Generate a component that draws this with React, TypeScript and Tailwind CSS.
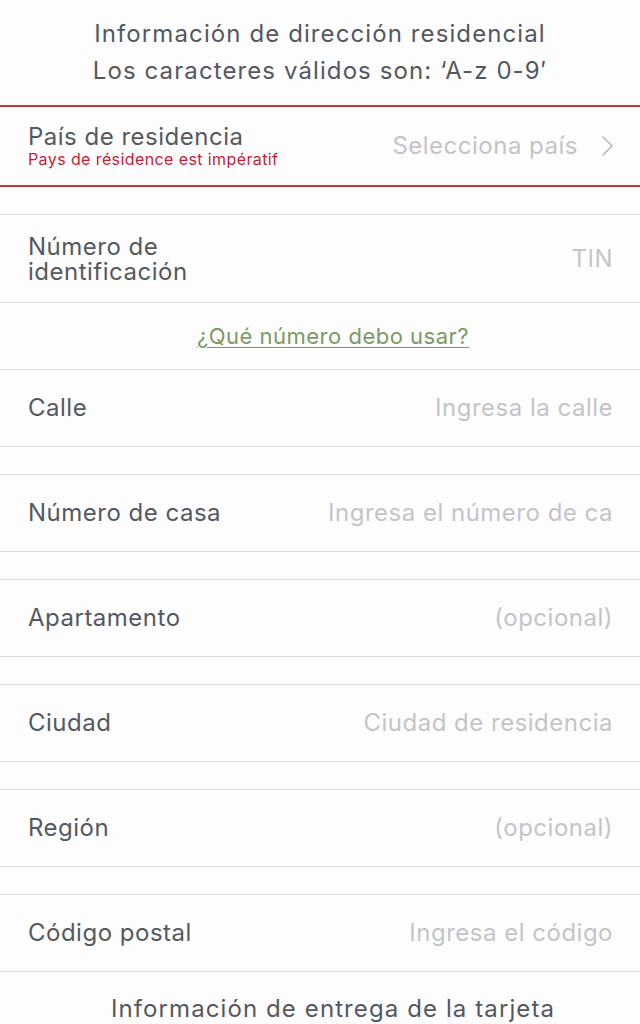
import React from 'react';

const FONT = { fontFamily: 'Inter, "Noto Sans", sans-serif' };

type Field = {
  label: string;
  placeholder: string;
};

const FIELDS: Field[] = [
  { label: 'Número de casa', placeholder: 'Ingresa el número de ca' },
  { label: 'Apartamento', placeholder: '(opcional)' },
  { label: 'Ciudad', placeholder: 'Ciudad de residencia' },
  { label: 'Región', placeholder: '(opcional)' },
  { label: 'Código postal', placeholder: 'Ingresa el código' },
];

const Gap = () => <div className="h-[28px] border-b border-[#dcdcdf]" />;

const Row: React.FC<Field> = ({ label, placeholder }) => (
  <div className="flex h-[77px] items-center justify-between border-b border-[#dcdcdf] pl-[28px] pr-[27px]">
    <span className="text-[24px] tracking-[0.5px] text-[#55595f]">{label}</span>
    <span className="text-[24px] tracking-[0.5px] text-[#c4c4c8] whitespace-nowrap">{placeholder}</span>
  </div>
);

export default function App() {
  return (
    <div className="min-h-[1024px] bg-[#fefdfe]" style={FONT}>
      <div className="flex h-[105px] flex-col items-center justify-center pb-[2px] text-[24px] leading-[37px] tracking-[1.1px] text-[#54585e]">
        <p>Información de dirección residencial</p>
        <p>Los caracteres válidos son: ‘A-z 0-9′</p>
      </div>

      <div className="flex h-[82px] items-center justify-between border-y-2 border-[#c0393f] pl-[28px] pr-[27px]">
        <div className="flex flex-col">
          <span className="text-[24px] leading-[26px] tracking-[0.5px] text-[#55595f]">País de residencia</span>
          <span className="text-[16px] leading-[18px] tracking-[0.4px] text-[#c41e36]">Pays de résidence est impératif</span>
        </div>
        <div className="flex items-center gap-[24px]">
          <span className="text-[24px] tracking-[0.5px] text-[#c4c4c8]">Selecciona país</span>
          <svg width="11" height="20" viewBox="0 0 11 20" fill="none">
            <path d="M1 1l9 9-9 9" stroke="#b6b6ba" strokeWidth="1.6" strokeLinecap="round" strokeLinejoin="round" />
          </svg>
        </div>
      </div>

      <Gap />

      <div className="flex h-[88px] items-center justify-between border-b border-[#dcdcdf] pl-[28px] pr-[27px]">
        <span className="text-[24px] leading-[25px] tracking-[0.5px] text-[#55595f]">
          Número de
          <br />
          identificación
        </span>
        <span className="text-[24px] tracking-[0.5px] text-[#c4c4c8]">TIN</span>
      </div>

      <div className="flex h-[67px] items-center justify-center border-b border-[#dcdcdf] pl-[26px]">
        <a className="text-[22px] tracking-[0.5px] text-[#7b9a62] underline underline-offset-[3px] decoration-1">
          ¿Qué número debo usar?
        </a>
      </div>

      <Row label="Calle" placeholder="Ingresa la calle" />

      {FIELDS.map((f) => (
        <React.Fragment key={f.label}>
          <Gap />
          <Row {...f} />
        </React.Fragment>
      ))}

      <div className="flex justify-center pl-[26px] pt-[22px] text-[24px] leading-[30px] tracking-[1.1px] text-[#54585e]">
        Información de entrega de la tarjeta
      </div>
    </div>
  );
}
